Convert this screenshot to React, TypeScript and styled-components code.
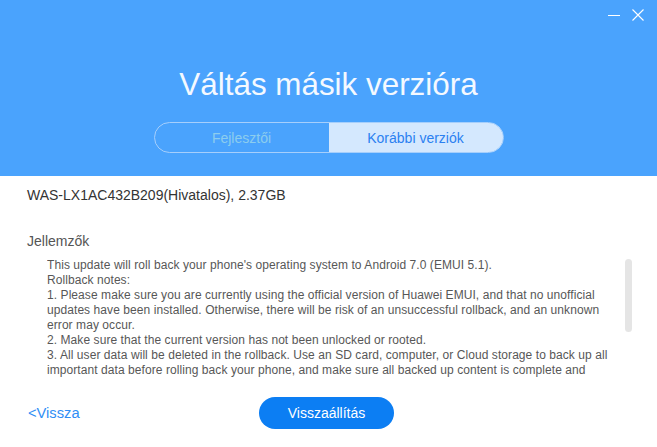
import React from "react";
import styled, { createGlobalStyle } from "styled-components";

const Global = createGlobalStyle`
  html, body { margin: 0; padding: 0; background: #ffffff; }
  body { font-family: "Liberation Sans", Arial, sans-serif; }
  * { box-sizing: border-box; }
`;

const Window = styled.div`
  width: 657px;
  height: 447px;
  display: flex;
  flex-direction: column;
  background: #ffffff;
  overflow: hidden;
`;

const Header = styled.header`
  height: 176px;
  flex: none;
  background: #4aa3fd;
  display: flex;
  flex-direction: column;
  align-items: center;
`;

const TitleBar = styled.div`
  align-self: stretch;
  display: flex;
  justify-content: flex-end;
  gap: 12px;
  padding: 9px 13px 0 0;
`;

const WinButton = styled.button`
  width: 12px;
  height: 12px;
  padding: 0;
  border: 0;
  background: transparent;
  display: flex;
  cursor: pointer;
`;

const Title = styled.h1`
  margin: 46px 0 0;
  font-weight: normal;
  font-size: 31.4px;
  line-height: 36px;
  color: #f4f9ff;
`;

const TabGroup = styled.div`
  margin-top: 19px;
  width: 350px;
  height: 31px;
  display: flex;
  border: 1px solid #a6cffc;
  border-radius: 16px;
  overflow: hidden;
`;

const Tab = styled.div<{ $active?: boolean }>`
  flex: 1;
  display: flex;
  align-items: center;
  justify-content: center;
  font-size: 14px;
  color: ${(p) => (p.$active ? "#2b80f1" : "#8ccdee")};
  background: ${(p) => (p.$active ? "#d4e8fe" : "transparent")};
`;

const Body = styled.main`
  flex: 1;
  display: flex;
  flex-direction: column;
  padding: 9px 0 0 27px;
`;

const Version = styled.div`
  font-size: 14px;
  line-height: 20px;
  color: #333333;
`;

const SectionLabel = styled.div`
  margin-top: 26px;
  font-size: 14px;
  line-height: 20px;
  color: #555555;
`;

const NotesFrame = styled.div`
  position: relative;
  margin: 7px 0 0 20px;
  width: 586px;
  height: 120px;
`;

const NotesText = styled.div`
  width: 578px;
  height: 120px;
  overflow: hidden;
  font-size: 12px;
  line-height: 15px;
  letter-spacing: 0.07px;
  color: #575757;
`;

const ScrollThumb = styled.div`
  position: absolute;
  top: 1px;
  right: 1px;
  width: 7px;
  height: 73px;
  border-radius: 4px;
  background: #e5e5e5;
`;

const Note = styled.p`
  margin: 0;
`;

const Footer = styled.footer`
  margin-top: 19px;
  display: grid;
  grid-template-columns: 1fr auto 1fr;
  align-items: center;
  padding-right: 31px;
`;

const BackLink = styled.a`
  justify-self: start;
  margin-left: 1px;
  font-size: 14.7px;
  color: #2f8ef5;
  text-decoration: none;
  cursor: pointer;
`;

const PrimaryButton = styled.button`
  width: 135px;
  height: 32px;
  border: 0;
  border-radius: 16px;
  background: #0c7ef3;
  color: #ffffff;
  font-family: "Liberation Sans", Arial, sans-serif;
  font-size: 14px;
  cursor: pointer;
`;

const notes = [
  "This update will roll back your phone's operating system to Android 7.0 (EMUI 5.1).",
  "Rollback notes:",
  "1. Please make sure you are currently using the official version of Huawei EMUI, and that no unofficial updates have been installed. Otherwise, there will be risk of an unsuccessful rollback, and an unknown error may occur.",
  "2. Make sure that the current version has not been unlocked or rooted.",
  "3. All user data will be deleted in the rollback. Use an SD card, computer, or Cloud storage to back up all important data before rolling back your phone, and make sure all backed up content is complete and",
];

export default function App() {
  return (
    <Window>
      <Global />
      <Header>
        <TitleBar>
          <WinButton aria-label="Minimize">
            <svg width="12" height="12" viewBox="0 0 12 12">
              <line x1="0" y1="6.5" x2="12" y2="6.5" stroke="#ffffff" strokeWidth="1" />
            </svg>
          </WinButton>
          <WinButton aria-label="Close">
            <svg width="12" height="12" viewBox="0 0 12 12">
              <path d="M0.5 0.5 L11.5 11.5 M11.5 0.5 L0.5 11.5" stroke="#ffffff" strokeWidth="1.1" />
            </svg>
          </WinButton>
        </TitleBar>
        <Title>Váltás másik verzióra</Title>
        <TabGroup>
          <Tab>Fejlesztői</Tab>
          <Tab $active>Korábbi verziók</Tab>
        </TabGroup>
      </Header>
      <Body>
        <Version>WAS-LX1AC432B209(Hivatalos), 2.37GB</Version>
        <SectionLabel>Jellemzők</SectionLabel>
        <NotesFrame>
          <NotesText>
            {notes.map((n, i) => (
              <Note key={i}>{n}</Note>
            ))}
          </NotesText>
          <ScrollThumb />
        </NotesFrame>
        <Footer>
          <BackLink>&lt;Vissza</BackLink>
          <PrimaryButton>Visszaállítás</PrimaryButton>
          <span />
        </Footer>
      </Body>
    </Window>
  );
}
